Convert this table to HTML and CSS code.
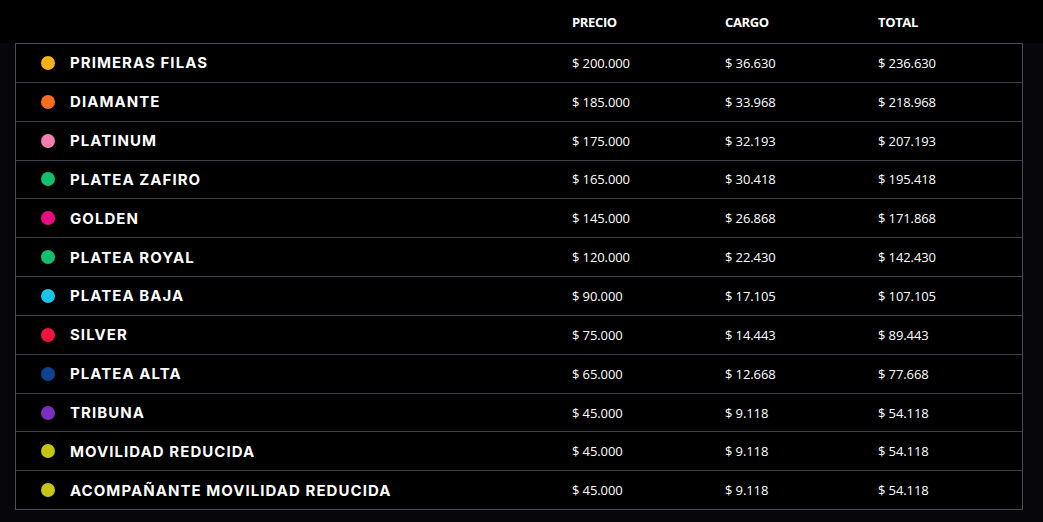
FILE: index.html
```html
<!DOCTYPE html>
<html lang="es">
<head>
<meta charset="utf-8">
<title>Precios</title>
<link rel="stylesheet" href="styles.css">
</head>
<body>
<div class="wrap">
  <div class="head">
    <div></div>
    <div class="th">PRECIO</div>
    <div class="th">CARGO</div>
    <div class="th">TOTAL</div>
  </div>
  <div class="table">
    <div class="row"><div class="name"><span class="dot c1"></span>PRIMERAS FILAS</div><div class="num">$ 200.000</div><div class="num">$ 36.630</div><div class="num">$ 236.630</div></div>
    <div class="row"><div class="name"><span class="dot c2"></span>DIAMANTE</div><div class="num">$ 185.000</div><div class="num">$ 33.968</div><div class="num">$ 218.968</div></div>
    <div class="row"><div class="name"><span class="dot c3"></span>PLATINUM</div><div class="num">$ 175.000</div><div class="num">$ 32.193</div><div class="num">$ 207.193</div></div>
    <div class="row"><div class="name"><span class="dot c4"></span>PLATEA ZAFIRO</div><div class="num">$ 165.000</div><div class="num">$ 30.418</div><div class="num">$ 195.418</div></div>
    <div class="row"><div class="name"><span class="dot c5"></span>GOLDEN</div><div class="num">$ 145.000</div><div class="num">$ 26.868</div><div class="num">$ 171.868</div></div>
    <div class="row"><div class="name"><span class="dot c4"></span>PLATEA ROYAL</div><div class="num">$ 120.000</div><div class="num">$ 22.430</div><div class="num">$ 142.430</div></div>
    <div class="row"><div class="name"><span class="dot c6"></span>PLATEA BAJA</div><div class="num">$ 90.000</div><div class="num">$ 17.105</div><div class="num">$ 107.105</div></div>
    <div class="row"><div class="name"><span class="dot c7"></span>SILVER</div><div class="num">$ 75.000</div><div class="num">$ 14.443</div><div class="num">$ 89.443</div></div>
    <div class="row"><div class="name"><span class="dot c8"></span>PLATEA ALTA</div><div class="num">$ 65.000</div><div class="num">$ 12.668</div><div class="num">$ 77.668</div></div>
    <div class="row"><div class="name"><span class="dot c9"></span>TRIBUNA</div><div class="num">$ 45.000</div><div class="num">$ 9.118</div><div class="num">$ 54.118</div></div>
    <div class="row"><div class="name"><span class="dot c10"></span>MOVILIDAD REDUCIDA</div><div class="num">$ 45.000</div><div class="num">$ 9.118</div><div class="num">$ 54.118</div></div>
    <div class="row"><div class="name"><span class="dot c10"></span>ACOMPAÑANTE MOVILIDAD REDUCIDA</div><div class="num">$ 45.000</div><div class="num">$ 9.118</div><div class="num">$ 54.118</div></div>
  </div>
</div>
</body>
</html>
```

FILE: styles.css
```css
html, body {
  margin: 0;
  padding: 0;
  background: #06060b;
}
.wrap {
  padding: 0 20px 0 15px;
}
.head {
  display: grid;
  grid-template-columns: 556px 153px 153px 1fr;
  height: 43px;
  align-items: center;
  background: #000;
  margin-right: -20px;
  margin-left: -15px;
  padding-left: 16px;
}
.th {
  font-family: "Open Sans", sans-serif;
  font-weight: 700;
  font-size: 13px;
  color: #fff;
  letter-spacing: -0.35px;
  padding-top: 1px;
}
.table {
  border: 1px solid #4b4b57;
  background: #000;
}
.row {
  display: grid;
  grid-template-columns: 556px 153px 153px 1fr;
  height: 37.85px;
  align-items: center;
  border-bottom: 1px solid #3e3e4a;
}
.row:last-child {
  border-bottom: none;
}
.name {
  display: flex;
  align-items: center;
  gap: 15px;
  padding-left: 25px;
  font-family: "Inter", sans-serif;
  font-weight: 700;
  font-size: 15px;
  color: #fff;
  letter-spacing: 1.05px;
}
.dot {
  width: 14px;
  height: 14px;
  border-radius: 50%;
  flex: none;
}
.num {
  font-family: "Open Sans", sans-serif;
  font-size: 13px;
  color: #fff;
  letter-spacing: -0.1px;
}
.c1 { background: #fbb117; }
.c2 { background: #fa6d1c; }
.c3 { background: #f37eb1; }
.c4 { background: #13bf6c; }
.c5 { background: #ea0b80; }
.c6 { background: #18c4e8; }
.c7 { background: #f0123f; }
.c8 { background: #0d4393; }
.c9 { background: #7a2fc1; }
.c10 { background: #c5c514; }
```
